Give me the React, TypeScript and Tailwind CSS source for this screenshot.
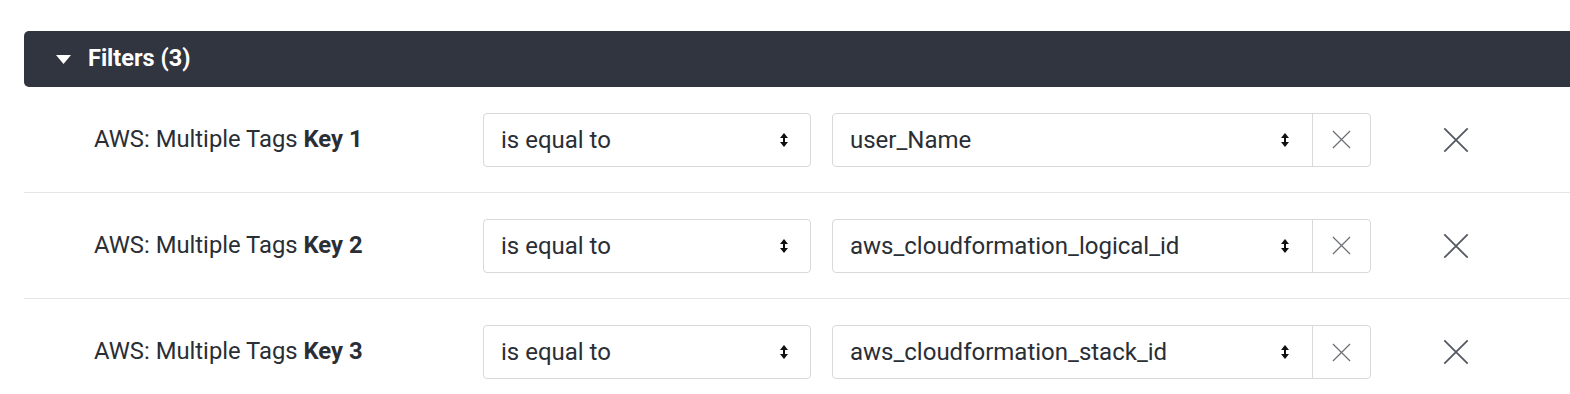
import React from "react";

interface FilterRow {
  key: string;
  operator: string;
  value: string;
}

const rows: FilterRow[] = [
  { key: "Key 1", operator: "is equal to", value: "user_Name" },
  { key: "Key 2", operator: "is equal to", value: "aws_cloudformation_logical_id" },
  { key: "Key 3", operator: "is equal to", value: "aws_cloudformation_stack_id" },
];

const SortArrows = () => (
  <svg width="8" height="14" viewBox="0 0 8 14" className="shrink-0">
    <path d="M4 0 L8 5 L0 5 Z" fill="#111" />
    <rect x="3" y="4" width="2" height="6" fill="#111" />
    <path d="M4 14 L8 9 L0 9 Z" fill="#111" />
  </svg>
);

const Cross = ({ size, color, width }: { size: number; color: string; width: number }) => (
  <svg width={size} height={size} viewBox="0 0 20 20">
    <path d="M1 1 L19 19 M19 1 L1 19" stroke={color} strokeWidth={width} fill="none" />
  </svg>
);

const App: React.FC = () => {
  return (
    <div
      className="w-[1570px] h-[394px] bg-white overflow-hidden pt-[31px] pl-[24px]"
      style={{ fontFamily: "Roboto, 'Liberation Sans', sans-serif" }}
    >
      <div className="h-[56px] bg-[#31353f] rounded-l-[5px] flex items-center pl-[32px]">
        <svg width="15" height="9" viewBox="0 0 15 9" className="mr-[17px]">
          <path d="M0 0 L15 0 L7.5 9 Z" fill="#fff" />
        </svg>
        <span className="text-white font-bold text-[23.5px]">Filters (3)</span>
      </div>
      {rows.map((r, i) => (
        <div
          key={i}
          className={`h-[106px] flex items-center ${i < rows.length - 1 ? "border-b border-[#e6e6e6]" : ""}`}
        >
          <div className="w-[459px] pl-[70px] text-[23.8px] text-[#2a2e35]">
            AWS: Multiple Tags <span className="font-bold">{r.key}</span>
          </div>
          <div className="w-[328px] h-[54px] border border-[#d9d9d9] rounded-[4px] flex items-center justify-between pl-[17px] pr-[22px] text-[24px] text-[#2a2e35]">
            <span>{r.operator}</span>
            <SortArrows />
          </div>
          <div className="ml-[21px] w-[539px] h-[54px] border border-[#d9d9d9] rounded-[4px] flex items-center text-[24px] text-[#2a2e35]">
            <div className="flex-1 flex items-center justify-between pl-[17px] pr-[23px]">
              <span>{r.value}</span>
              <SortArrows />
            </div>
            <div className="w-[58px] h-full border-l border-[#d9d9d9] flex items-center justify-center">
              <Cross size={19} color="#6b6f75" width={1.3} />
            </div>
          </div>
          <div className="ml-[72px] flex items-center">
            <Cross size={26} color="#555a62" width={1.4} />
          </div>
        </div>
      ))}
    </div>
  );
};

export default App;
